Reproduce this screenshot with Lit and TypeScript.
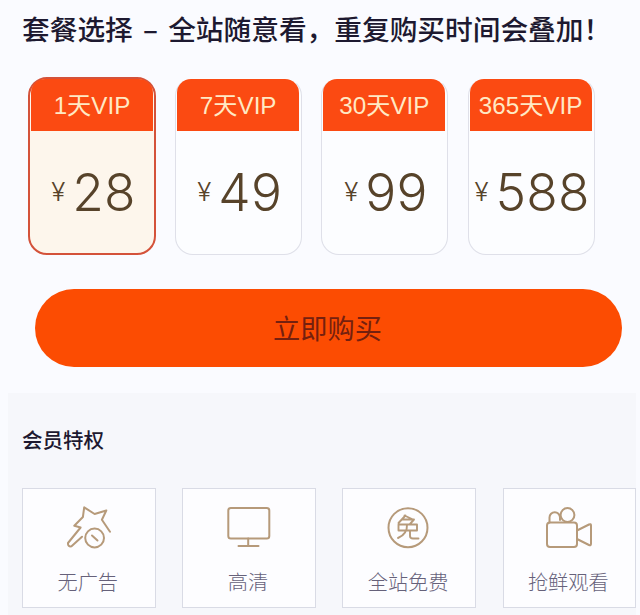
import { LitElement, html, css, svg } from "lit";
import { customElement, property } from "lit/decorators.js";
import { classMap } from "lit/directives/class-map.js";

const icons = {
  star: svg`<path d="M41 24.700 32.900 12.800 37.300 3.500 25.600 7 15.200 .300 13.900 10 5.300 18.800 11.600 20.500 -1 36Q-1.300 40 2.500 39.300L13 29.700"/><circle cx="25.600" cy="31" r="9.400"/><path d="m23 28.500 5.500 5"/>`,
  screen: svg`<rect x="-.700" y="1" width="41" height="30.500" rx="2.500"/><path d="M19.200 31.500v7M9.500 39h20"/>`,
  free: svg`<circle cx="19" cy="20.700" r="19.500"/><path stroke-width="1.900" d="M15.500 8.500 24 12.500M16.500 8.500 9.500 16M14 12.500H25L21 17M9.500 17.500H28V23.500H9.500ZM18 17.500Q18.500 27 9 31M21 23.500V29Q21 31.500 24 31.500H29.500"/>`,
  camera: svg`<rect x="-2" y="15.500" width="30" height="24.500" rx="3"/><path d="M28 23.500 40 17.500Q42 16.500 42 18.500V36.500Q42 39 40 38L28 32"/><circle cx="18.500" cy="8" r="6.900"/><path d="M.500 15.500V10.500A5.200 5.200 0 0 1 11 10.500V13"/>`,
};

@customElement("plan-card")
class PlanCard extends LitElement {
  @property() name = "";
  @property() price = "";
  @property({ type: Boolean }) selected = false;

  static styles = css`
    :host { display: block; }
    .card {
      box-sizing: border-box;
      height: 177px;
      padding: 0 2px 0 1px;
      border: 1px solid #dfe0e9;
      border-top-color: transparent;
      border-radius: 18px;
      background: #fcfdff;
      display: flex;
      flex-direction: column;
    }
    .selected {
      height: 178px;
      margin: -1px 0 0 0;
      padding: 0 1px 0 1px;
      border: 2px solid #d4523a;
      border-radius: 19px;
      background: #fdf6ec;
    }
    .head {
      height: 52px;
      border-radius: 14px 14px 0 0;
      background: #fb4a12;
      color: #ffe9c4;
      font-size: 24.200px;
      line-height: 53px;
      text-align: center;
      white-space: nowrap;
    }
    .price {
      display: flex;
      justify-content: center;
      align-items: center;
      gap: 7px;
      height: 121px;
      padding-left: 3px;
      font-family: Inter, "Liberation Sans", sans-serif;
      font-weight: 300;
      color: #57432a;
      white-space: nowrap;
    }
    .sign { font-size: 26px; line-height: 120px; }
    .num { font-size: 51.500px; line-height: 120px; letter-spacing: .200px; font-weight: 300; }
  `;

  render() {
    return html`<div class=${classMap({ card: true, selected: this.selected })}>
      <div class="head">${this.name}</div>
      <div class="price"><span class="sign">¥</span><span class="num">${this.price}</span></div>
    </div>`;
  }
}

@customElement("perk-tile")
class PerkTile extends LitElement {
  @property() label = "";
  @property() icon: keyof typeof icons = "star";

  static styles = css`
    .tile {
      box-sizing: border-box;
      height: 120px;
      border: 1px solid #d9dbe5;
      background: #fdfdff;
      display: flex;
      flex-direction: column;
      align-items: center;
      padding-top: 18px;
    }
    svg {
      width: 40px;
      height: 42px;
      overflow: visible;
      fill: none;
      stroke: #b69a7a;
      stroke-width: 2;
      stroke-linejoin: round;
      stroke-linecap: round;
    }
    .label { margin: 19px 2px 0 0; font-size: 20.200px; line-height: 30px; color: #66617a; font-weight: 300; white-space: nowrap; }
  `;

  render() {
    return html`<div class="tile">
      <svg viewBox="0 0 40 42">${icons[this.icon]}</svg>
      <div class="label">${this.label}</div>
    </div>`;
  }
}

@customElement("app-root")
class AppRoot extends LitElement {
  static styles = css`
    :host {
      display: flex;
      flex-direction: column;
      box-sizing: border-box;
      height: 615px;
      overflow: hidden;
      background: #fafbff;
      font-family: "Liberation Sans", "Noto Sans CJK SC", sans-serif;
    }
    .title {
      margin: 8px 0 0 22px;
      font: 500 27.700px/40px "Noto Sans CJK SC", sans-serif;
      color: #1d1930;
      white-space: nowrap;
      word-spacing: 4px;
    }
    .plans {
      display: grid;
      grid-template-columns: 128px repeat(3, 127px);
      gap: 19.200px;
      margin: 30px 0 0 28px;
    }
    .buy {
      margin: 34px 18px 0 35px;
      height: 78px;
      border: 0;
      border-radius: 39px;
      background: #fc4c02;
      color: #74200f;
      font: 400 27.200px/76px "Noto Sans CJK SC", sans-serif;
      padding: 0 2px 2px 0;
      text-align: center;
    }
    .perks {
      flex: 1;
      margin: 26px 4px 0 8px;
      padding: 31px 0 0 14px;
      background: #f6f7fb;
    }
    .subtitle { margin: 0; font: 500 20.500px/30px "Noto Sans CJK SC", sans-serif; color: #1d1930; }
    .tiles {
      display: grid;
      grid-template-columns: repeat(4, 133.500px);
      gap: 26.700px;
      margin-top: 34px;
    }
  `;

  render() {
    return html`
      <div class="title">套餐选择 – 全站随意看，重复购买时间会叠加！</div>
      <div class="plans">
        <plan-card name="1天VIP" price="28" selected></plan-card>
        <plan-card name="7天VIP" price="49"></plan-card>
        <plan-card name="30天VIP" price="99"></plan-card>
        <plan-card name="365天VIP" price="588"></plan-card>
      </div>
      <button class="buy">立即购买</button>
      <section class="perks">
        <h2 class="subtitle">会员特权</h2>
        <div class="tiles">
          <perk-tile icon="star" label="无广告"></perk-tile>
          <perk-tile icon="screen" label="高清"></perk-tile>
          <perk-tile icon="free" label="全站免费"></perk-tile>
          <perk-tile icon="camera" label="抢鲜观看"></perk-tile>
        </div>
      </section>
    `;
  }
}
